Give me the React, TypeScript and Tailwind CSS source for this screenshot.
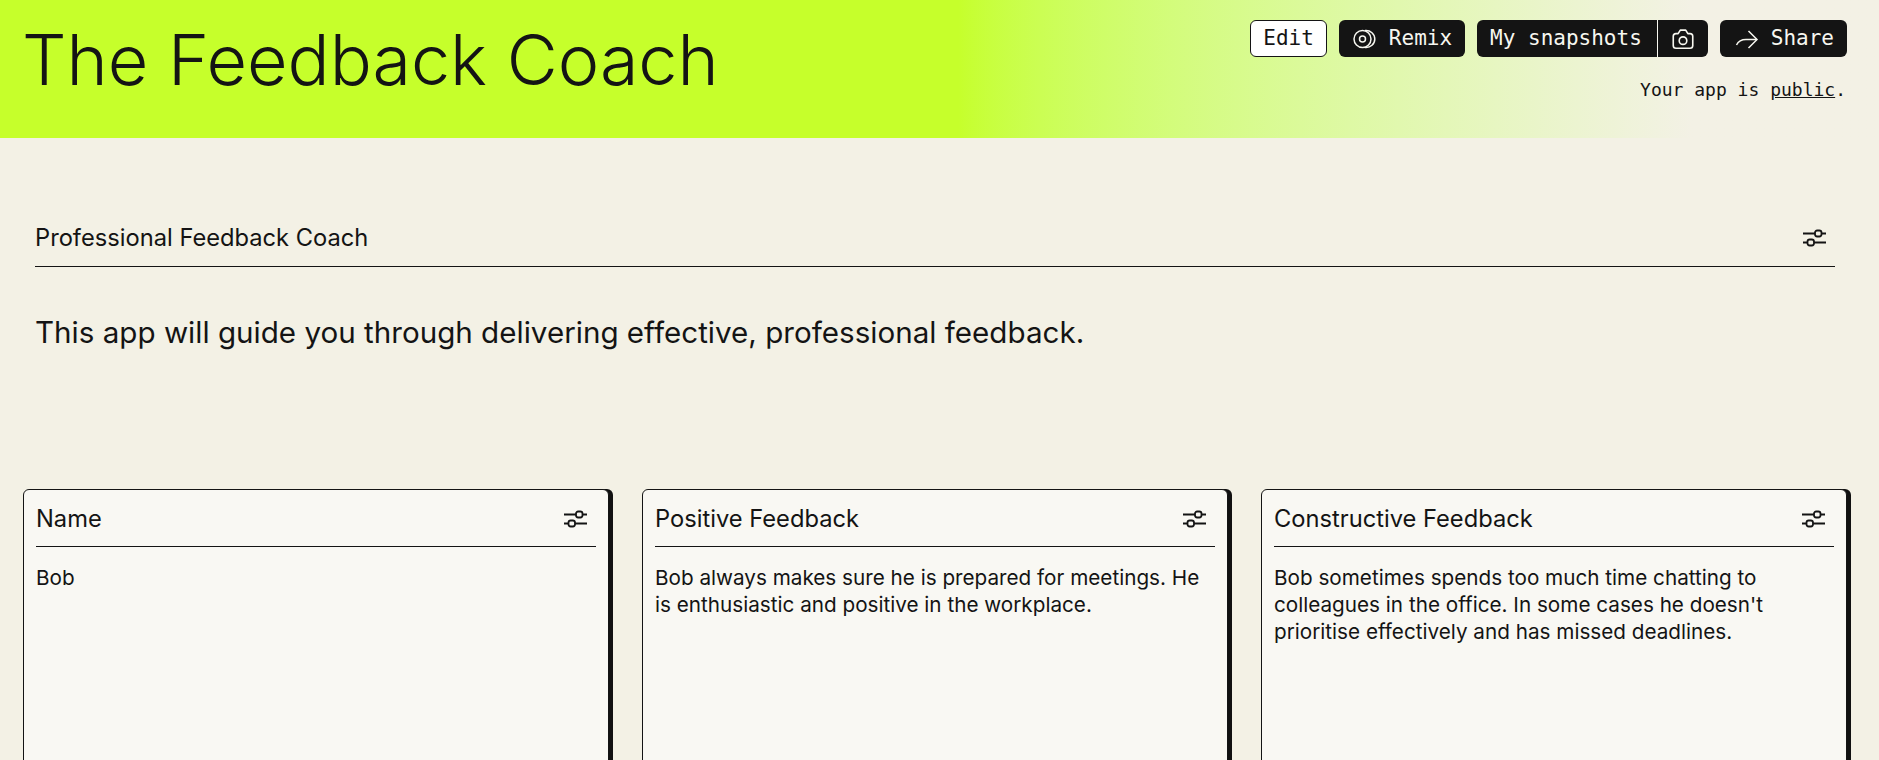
const sans = "font-['Inter',sans-serif]";
const mono = "font-['DejaVu_Sans_Mono',monospace]";

function Sliders({ className }: { className?: string }) {
  return (
    <svg viewBox="0 0 25 20" className={className} fill="none" stroke="#141414" strokeWidth="1.800">
      <path d="M1 5.500H13M19.500 5.500H24M1 14.500H5.500M12 14.500H24" />
      <rect x="13" y="2.500" width="6.500" height="6" rx="2.200" />
      <rect x="5.500" y="11.500" width="6.500" height="6" rx="2.200" />
    </svg>
  );
}

function Remix() {
  return (
    <svg viewBox="0 0 24 24" className="w-[24px] h-[24px]" fill="none" stroke="#f7f7f0" strokeWidth="1.500">
      <circle cx="10.500" cy="12" r="8.500" />
      <circle cx="10.500" cy="12" r="3" />
      <path d="M13 3.600C18.500 3 22.800 7 22.800 12C22.800 17 18.500 21 13 20.400" />
    </svg>
  );
}

function CameraIcon() {
  return (
    <svg viewBox="0 0 24 24" className="w-[26px] h-[26px]" fill="none" stroke="#f7f7f0" strokeWidth="1.500" strokeLinejoin="round">
      <path d="M3 9.500C3 8 4 7 5.500 7H7.500L9.500 3.800H14.500L16.500 7H18.500C20 7 21 8 21 9.500V18C21 19.500 20 20.500 18.500 20.500H5.500C4 20.500 3 19.500 3 18Z" />
      <circle cx="12" cy="13.500" r="3.500" />
    </svg>
  );
}

function ShareArrow() {
  return (
    <svg viewBox="0 0 24 24" className="w-[24px] h-[24px]" fill="none" stroke="#f7f7f0" strokeWidth="1.500">
      <path d="M1.500 18C3.500 14 7 12.500 11 12.500H22" />
      <path d="M13.500 4L22 12.500L13.500 21" />
    </svg>
  );
}

function Card({ title, lines }: { title: string; lines: string[] }) {
  return (
    <div className="h-[400px] rounded-[6px] border border-[#141414] bg-[#f9f8f3] shadow-[4px_0_0_#111111] px-3 pt-[7px]">
      <div className="flex items-center justify-between h-[50px] border-b border-[#141414] pb-[6px]">
        <span className={`${sans} text-[23.700px] text-[#141414]`}>{title}</span>
        <Sliders className="w-[25px] h-[20px] mr-[8px]" />
      </div>
      <div className={`${sans} mt-[17px] text-[#141414] text-[20.700px] leading-[27px]`}>
        {lines.map((l) => (
          <div key={l}>{l}</div>
        ))}
      </div>
    </div>
  );
}

export default function App() {
  return (
    <div className="h-[760px] overflow-hidden bg-[#f3f1e5] text-[#141414]">
      <header className="h-[138px] flex justify-between pl-[22px] pr-[32px] bg-gradient-to-r from-[#c6ff2b] from-51% to-[#f3f1e5] to-90%">
        <h1 className={`${sans} font-light text-[70px] leading-none pt-[25px] text-[#141414]`}>The Feedback Coach</h1>
        <div className="pt-5 flex flex-col items-end">
          <div className={`${mono} flex gap-3 text-[21px] leading-none`}>
            <button className="h-[37px] px-[12px] rounded-[6px] border border-[#141414] bg-white text-[#141414]">Edit</button>
            <button className="h-[37px] pl-[13px] pr-[13px] rounded-[6px] bg-[#141414] text-[#f7f7f0] flex items-center gap-[13px]"><Remix />Remix</button>
            <div className="h-[37px] rounded-[6px] bg-[#141414] text-[#f7f7f0] flex items-stretch">
              <button className="pl-[13px] pr-[15px] border-r border-[#f7f7f0]">My snapshots</button>
              <button className="px-[12px] flex items-center"><CameraIcon /></button>
            </div>
            <button className="h-[37px] pl-[15px] pr-[13px] rounded-[6px] bg-[#141414] text-[#f7f7f0] flex items-center gap-[12px]"><ShareArrow />Share</button>
          </div>
          <p className={`${mono} mt-[22px] mr-[1px] text-[18px] leading-[22px] text-[#141414]`}>Your app is <span className="underline">public</span>.</p>
        </div>
      </header>
      <main className="pl-[35px] pr-[44px] pt-[78px]">
        <div className="flex items-center justify-between h-[51px] border-b border-[#141414] pb-[6px] pr-[8px]">
          <span className={`${sans} text-[23.700px]`}>Professional Feedback Coach</span>
          <Sliders className="w-[25px] h-[20px]" />
        </div>
        <p className={`${sans} mt-[47px] text-[29.600px] leading-[36px]`}>This app will guide you through delivering effective, professional feedback.</p>
      </main>
      <section className="grid grid-cols-3 gap-[33px] pl-[23px] pr-[32px] pt-[139px]">
        <Card title="Name" lines={["Bob"]} />
        <Card title="Positive Feedback" lines={["Bob always makes sure he is prepared for meetings. He", "is enthusiastic and positive in the workplace."]} />
        <Card title="Constructive Feedback" lines={["Bob sometimes spends too much time chatting to", "colleagues in the office. In some cases he doesn't", "prioritise effectively and has missed deadlines."]} />
      </section>
    </div>
  );
}
